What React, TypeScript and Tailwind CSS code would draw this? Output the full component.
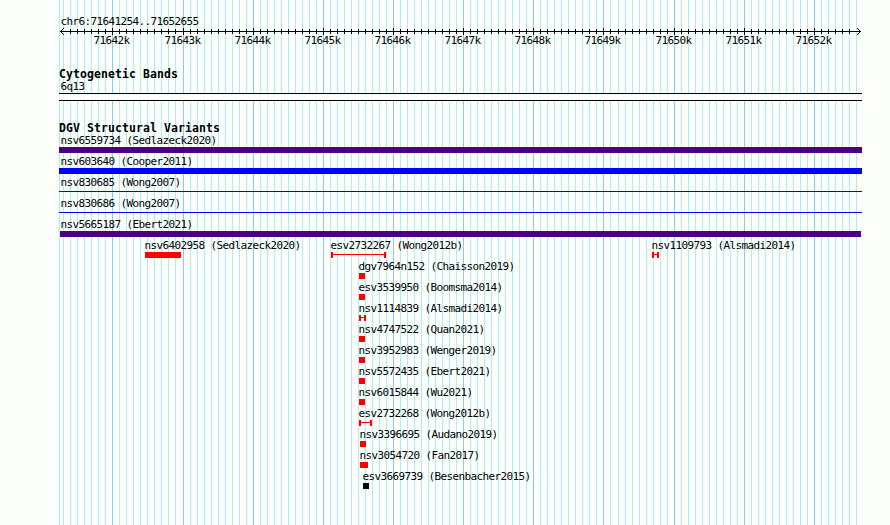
interface Variant {
  label: string;
  start: number;
  end: number;
  labelX: number;
  color: string;
  glyph?: 'box' | 'line' | 'range';
}

const REGION_START = 71641254;
const REGION_END = 71652655;
const PAD_LEFT = 60;
const PX_PER_BP = 0.070162;

const toX = (bp: number) => Math.round(PAD_LEFT + (bp - REGION_START) * PX_PER_BP);

const TICKS = Array.from({ length: 114 }, (_, i) => {
  const bp = 71641300 + i * 100;
  return { bp, x: toX(bp), major: bp % 1000 === 0 };
});
const MAJOR_TICKS = TICKS.filter((t) => t.major);
// the outermost ticks would collide with the arrow heads
const RULER_TICKS = TICKS.slice(1, -1);

// start / end are panel pixels, end exclusive
const SPANNING: Variant[] = [
  { label: 'nsv6559734 (Sedlazeck2020)', start: 59, end: 862, labelX: 60, color: 'bg-[#4b0082]' },
  { label: 'nsv603640 (Cooper2011)', start: 59, end: 862, labelX: 60, color: 'bg-[#0000ff]' },
  { label: 'nsv830685 (Wong2007)', start: 59, end: 862, labelX: 60, color: 'bg-[#0000ff]', glyph: 'line' },
  { label: 'nsv830686 (Wong2007)', start: 59, end: 862, labelX: 60, color: 'bg-[#0000ff]', glyph: 'line' },
  { label: 'nsv5665187 (Ebert2021)', start: 60, end: 861, labelX: 60, color: 'bg-[#4b0082]' },
];

const LOCAL: Variant[][] = [
  [
    { label: 'nsv6402958 (Sedlazeck2020)', start: 145, end: 181, labelX: 144, color: 'bg-[#ff0000]' },
    { label: 'esv2732267 (Wong2012b)', start: 331, end: 386, labelX: 330, color: 'bg-[#ff0000]', glyph: 'range' },
    { label: 'nsv1109793 (Alsmadi2014)', start: 652, end: 659, labelX: 651, color: 'bg-[#ff0000]', glyph: 'range' },
  ],
  [{ label: 'dgv7964n152 (Chaisson2019)', start: 359, end: 365, labelX: 358, color: 'bg-[#ff0000]' }],
  [{ label: 'esv3539950 (Boomsma2014)', start: 359, end: 365, labelX: 358, color: 'bg-[#ff0000]' }],
  [{ label: 'nsv1114839 (Alsmadi2014)', start: 359, end: 366, labelX: 358, color: 'bg-[#ff0000]', glyph: 'range' }],
  [{ label: 'nsv4747522 (Quan2021)', start: 359, end: 365, labelX: 358, color: 'bg-[#ff0000]' }],
  [{ label: 'nsv3952983 (Wenger2019)', start: 359, end: 365, labelX: 358, color: 'bg-[#ff0000]' }],
  [{ label: 'nsv5572435 (Ebert2021)', start: 359, end: 365, labelX: 358, color: 'bg-[#ff0000]' }],
  [{ label: 'nsv6015844 (Wu2021)', start: 359, end: 365, labelX: 358, color: 'bg-[#ff0000]' }],
  [{ label: 'esv2732268 (Wong2012b)', start: 359, end: 372, labelX: 358, color: 'bg-[#ff0000]', glyph: 'range' }],
  [{ label: 'nsv3396695 (Audano2019)', start: 360, end: 366, labelX: 359, color: 'bg-[#ff0000]' }],
  [{ label: 'nsv3054720 (Fan2017)', start: 360, end: 368, labelX: 359, color: 'bg-[#ff0000]' }],
  [{ label: 'esv3669739 (Besenbacher2015)', start: 363, end: 369, labelX: 362, color: 'bg-black' }],
];

const ROWS: Variant[][] = [...SPANNING.map((v) => [v]), ...LOCAL];

/** Vertical guide lines behind every track. */
function Grid() {
  return (
    <svg className="absolute inset-0" width="890" height="525" shapeRendering="crispEdges">
      <rect x={59} y={0} width={1} height={525} fill="#afeeee" />
      {TICKS.map((t) => (
        <rect key={t.bp} x={t.x} y={0} width={1} height={525} fill={t.major ? '#87ceeb' : '#afeeee'} />
      ))}
    </svg>
  );
}

function Ruler() {
  return (
    <div>
      <svg className="block" width="890" height="7" shapeRendering="crispEdges">
        <rect x={60} y={3} width={801} height={1} />
        {RULER_TICKS.map((t) => (
          <rect key={t.bp} x={t.x} y={t.major ? 0 : 1} width={1} height={t.major ? 7 : 5} />
        ))}
        {[1, 2, 3].map((d) => (
          <g key={d}>
            <rect x={60 + d} y={3 - d} width={1} height={1} />
            <rect x={60 + d} y={3 + d} width={1} height={1} />
            <rect x={860 - d} y={3 - d} width={1} height={1} />
            <rect x={860 - d} y={3 + d} width={1} height={1} />
          </g>
        ))}
      </svg>
      <div className="relative -mt-px h-[13px]">
        {MAJOR_TICKS.map((t) => (
          <span key={t.bp} className="absolute top-0" style={{ left: t.x - 18.6 }}>{t.bp / 1000}k</span>
        ))}
      </div>
    </div>
  );
}

function Glyph({ v }: { v: Variant }) {
  if (v.glyph === 'line') return <div className={`mt-[2px] h-px w-full ${v.color}`} />;
  if (v.glyph === 'range') {
    return (
      <div className="flex h-[6px] w-full">
        <div className={`h-full w-[2px] ${v.color}`} />
        <div className={`mt-[2px] h-px flex-1 ${v.color}`} />
        <div className={`h-full w-[2px] ${v.color}`} />
      </div>
    );
  }
  return <div className={`h-[6px] w-full ${v.color}`} />;
}

function Feature({ v }: { v: Variant }) {
  return (
    <div className="col-start-1 row-start-1" style={{ marginLeft: v.start, width: v.end - v.start }}>
      <p className="h-[13px]" style={{ marginLeft: v.labelX + 0.4 - v.start }}>{v.label}</p>
      <Glyph v={v} />
    </div>
  );
}

function TrackTitle({ children }: { children: string }) {
  return <h2 className="h-[12px] pl-[59px] text-[11.5px] font-bold tracking-[0.077px]">{children}</h2>;
}

export default function App() {
  return (
    <div className="relative h-[525px] w-[890px] overflow-hidden bg-[#fdfffc] font-['DejaVu_Sans_Mono',monospace] text-[11px] leading-[13px] tracking-[-0.622px] whitespace-pre text-black">
      <Grid />
      <div className="relative pt-[15px]">
        <p className="h-[13px] pl-[60.4px]">chr6:{REGION_START}..{REGION_END}</p>
        <Ruler />

        <section className="mt-[21px]">
          <TrackTitle>Cytogenetic Bands</TrackTitle>
          <p className="h-[13px] pl-[60.4px]">6q13</p>
          <div className="ml-[59px] h-[8px] w-[803px] border-y border-black bg-[#fdfffc]" />
        </section>

        <section className="mt-[21px]">
          <TrackTitle>DGV Structural Variants</TrackTitle>
          {ROWS.map((row) => (
            <div key={row[0].label} className="grid h-[21px]">
              {row.map((v) => <Feature key={v.label} v={v} />)}
            </div>
          ))}
        </section>
      </div>
    </div>
  );
}
